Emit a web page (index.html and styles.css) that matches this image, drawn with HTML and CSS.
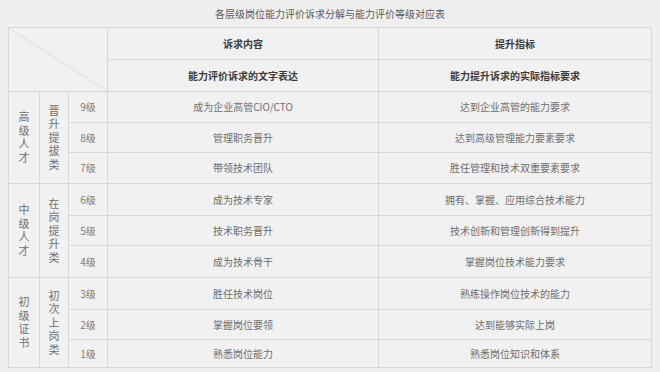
FILE: index.html
```html
<!DOCTYPE html>
<html lang="zh">
<head>
<meta charset="utf-8">
<link rel="stylesheet" href="styles.css">
</head>
<body>
<div class="title">各层级岗位能力评价诉求分解与能力评价等级对应表</div>
<table class="grid">
  <colgroup>
    <col class="c1"><col class="c2"><col class="c3"><col class="c4"><col class="c5">
  </colgroup>
  <tr class="h1">
    <td class="corner" colspan="3" rowspan="2"></td>
    <th>诉求内容</th>
    <th>提升指标</th>
  </tr>
  <tr class="h2">
    <th>能力评价诉求的文字表达</th>
    <th>能力提升诉求的实际指标要求</th>
  </tr>
  <tr class="r1">
    <td rowspan="3" class="vt"><span>高级人才</span></td>
    <td rowspan="3" class="vt"><span>晋升提拔类</span></td>
    <td class="lv">9级</td>
    <td>成为企业高管CIO/CTO</td>
    <td>达到企业高管的能力要求</td>
  </tr>
  <tr class="r2">
    <td class="lv">8级</td>
    <td>管理职务晋升</td>
    <td>达到高级管理能力要素要求</td>
  </tr>
  <tr class="r3">
    <td class="lv">7级</td>
    <td>带领技术团队</td>
    <td>胜任管理和技术双重要素要求</td>
  </tr>
  <tr class="r4">
    <td rowspan="3" class="vt"><span>中级人才</span></td>
    <td rowspan="3" class="vt"><span>在岗提升类</span></td>
    <td class="lv">6级</td>
    <td>成为技术专家</td>
    <td>拥有、掌握、应用综合技术能力</td>
  </tr>
  <tr class="r5">
    <td class="lv">5级</td>
    <td>技术职务晋升</td>
    <td>技术创新和管理创新得到提升</td>
  </tr>
  <tr class="r6">
    <td class="lv">4级</td>
    <td>成为技术骨干</td>
    <td>掌握岗位技术能力要求</td>
  </tr>
  <tr class="r7">
    <td rowspan="3" class="vt"><span>初级证书</span></td>
    <td rowspan="3" class="vt"><span>初次上岗类</span></td>
    <td class="lv">3级</td>
    <td>胜任技术岗位</td>
    <td>熟练操作岗位技术的能力</td>
  </tr>
  <tr class="r8">
    <td class="lv">2级</td>
    <td>掌握岗位要领</td>
    <td>达到能够实际上岗</td>
  </tr>
  <tr class="r9">
    <td class="lv">1级</td>
    <td>熟悉岗位能力</td>
    <td>熟悉岗位知识和体系</td>
  </tr>
</table>
</body>
</html>
```

FILE: styles.css
```css
html, body {
  margin: 0;
  padding: 0;
  background: #efefef;
}
body {
  font-family: "Noto Sans CJK SC", "Noto Sans", sans-serif;
  font-size: 10px;
  color: #6e6e6e;
  width: 660px;
  height: 372px;
  overflow: hidden;
}
.title {
  height: 27px;
  line-height: 28px;
  text-align: center;
  color: #5a5a5a;
  font-size: 10px;
}
.grid {
  margin-left: 8px;
  width: 643px;
  border-collapse: collapse;
  table-layout: fixed;
  background: #f1f1f1;
}
.c1 { width: 31px; }
.c2 { width: 29px; }
.c3 { width: 39px; }
.c4 { width: 271px; }
.c5 { width: 273px; }
.grid td, .grid th {
  border: 1px solid #d8d8d8;
  padding: 0;
  text-align: center;
  vertical-align: middle;
  line-height: 14px;
}
.grid th {
  font-weight: bold;
  color: #3c3c3c;
}
.h1, .h2 { height: 32px; }
.r1 { height: 31px; }
.r2 { height: 30px; }
.r3 { height: 31px; }
.r4 { height: 32px; }
.r5 { height: 30px; }
.r6 { height: 32px; }
.r7 { height: 32px; }
.r8 { height: 30px; }
.r9 { height: 28px; }
.corner {
  background: linear-gradient(to top right, transparent calc(50% - 0.6px), #d2d2d2 50%, transparent calc(50% + 0.6px));
}
.vt span {
  display: inline-block;
  width: 11px;
  font-size: 11px;
  line-height: 13.5px;
  word-break: break-all;
  color: #707070;
}
.lv {
  color: #7a7a7a;
}
```
